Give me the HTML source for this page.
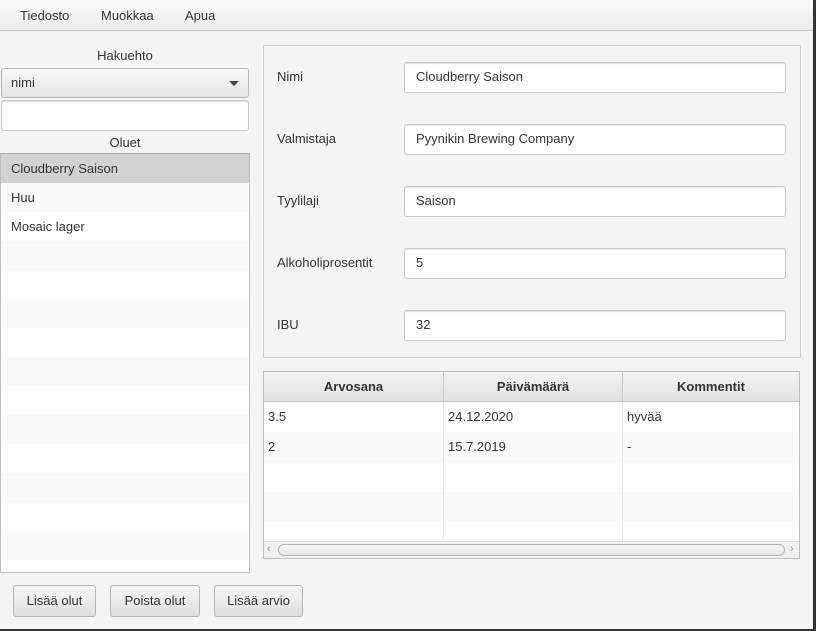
<!DOCTYPE html>
<html><head><meta charset="utf-8"><style>
*{box-sizing:border-box;margin:0;padding:0}
body{width:816px;height:631px;background:#333;font-family:"Liberation Sans",sans-serif;font-size:13px;color:#333;position:relative;overflow:hidden}
#app{position:absolute;left:0;top:0;width:813px;height:629px;background:#f4f4f4}
.abs{position:absolute}
.menu{left:0;top:0;width:813px;height:31px;background:linear-gradient(#fbfbfb,#ececec);border-bottom:1px solid #c8c8c8}
.menu span{position:absolute;top:8px}
.lbl{position:absolute}
.field{position:absolute;background:#fff;border:1px solid #c8c8c8;border-radius:3px;box-shadow:inset 0 1px 1px #e6e6e6;padding-left:11px;line-height:28px;color:#333}
.list{left:0;top:153px;width:250px;height:420px;border:1px solid #bdbdbd;border-top-color:#aaa;background:#fff;overflow:hidden}
.list div{height:29px;line-height:29px;padding-left:10px}
.btn{position:absolute;top:585px;height:32px;border:1px solid #b5b5b5;border-radius:3px;background:linear-gradient(#f7f7f7,#dedede);text-align:center;line-height:30px;color:#333}
table{border-collapse:collapse}
.tbl{left:263px;top:371px;width:537px;height:188px;border:1px solid #bdbdbd;background:#fff;overflow:hidden}
.hdr{position:absolute;top:0;height:30px;background:linear-gradient(#f4f4f4,#e2e2e2);border-right:1px solid #ccc;border-bottom:1px solid #c5c5c5;text-align:center;line-height:29px;font-weight:bold;color:#333}
.row{position:absolute;left:0;width:535px;height:30px}
.cell{position:absolute;top:0;height:30px;border-right:1px solid #e8e8e8;line-height:29px;padding-left:4px}
</style></head><body><div id="app">
<div class="abs menu"><span style="left:20px">Tiedosto</span><span style="left:101px">Muokkaa</span><span style="left:185px">Apua</span></div>
<div class="lbl" style="left:0;width:250px;text-align:center;top:48px">Hakuehto</div>
<div class="abs" style="left:1px;top:68px;width:248px;height:30px;border:1px solid #b8b8b8;border-radius:3px;background:linear-gradient(#f9f9f9,#e4e4e4);padding-left:9px;line-height:28px">nimi<div class="abs" style="right:9px;top:12px;width:0;height:0;border-left:5px solid transparent;border-right:5px solid transparent;border-top:5px solid #444"></div></div>
<div class="field" style="left:1px;top:100px;width:248px;height:31px"></div>
<div class="lbl" style="left:0;width:250px;text-align:center;top:135px">Oluet</div>
<div class="abs list">
<div style="background:#d2d2d2">Cloudberry Saison</div>
<div style="background:#f9f9f9">Huu</div>
<div>Mosaic lager</div>
<div style="background:#f9f9f9"></div><div></div><div style="background:#f9f9f9"></div><div></div><div style="background:#f9f9f9"></div><div></div><div style="background:#f9f9f9"></div><div></div><div style="background:#f9f9f9"></div><div></div><div style="background:#f9f9f9"></div><div></div>
</div>
<div class="abs" style="left:263px;top:45px;width:538px;height:313px;border:1px solid #cfcfcf"></div>
<div class="lbl" style="left:277px;top:69px">Nimi</div>
<div class="field" style="left:404px;top:62px;width:382px;height:31px">Cloudberry Saison</div>
<div class="lbl" style="left:277px;top:131px">Valmistaja</div>
<div class="field" style="left:404px;top:124px;width:382px;height:31px">Pyynikin Brewing Company</div>
<div class="lbl" style="left:277px;top:193px">Tyylilaji</div>
<div class="field" style="left:404px;top:186px;width:382px;height:31px">Saison</div>
<div class="lbl" style="left:277px;top:255px">Alkoholiprosentit</div>
<div class="field" style="left:404px;top:248px;width:382px;height:31px">5</div>
<div class="lbl" style="left:277px;top:317px">IBU</div>
<div class="field" style="left:404px;top:310px;width:382px;height:31px">32</div>
<div class="abs tbl">
<div class="hdr" style="left:0;width:180px">Arvosana</div>
<div class="hdr" style="left:180px;width:179px">Päivämäärä</div>
<div class="hdr" style="left:359px;width:177px">Kommentit</div>
<div class="row" style="top:30px;background:#fff"><div class="cell" style="left:0;width:180px">3.5</div><div class="cell" style="left:180px;width:179px">24.12.2020</div><div class="cell" style="left:359px;width:177px">hyvää</div></div>
<div class="row" style="top:60px;background:#f9f9f9"><div class="cell" style="left:0;width:180px">2</div><div class="cell" style="left:180px;width:179px">15.7.2019</div><div class="cell" style="left:359px;width:177px">-</div></div>
<div class="row" style="top:90px;background:#fff"><div class="cell" style="left:0;width:180px"></div><div class="cell" style="left:180px;width:179px"></div><div class="cell" style="left:359px;width:177px"></div></div>
<div class="row" style="top:120px;background:#f9f9f9"><div class="cell" style="left:0;width:180px"></div><div class="cell" style="left:180px;width:179px"></div><div class="cell" style="left:359px;width:177px"></div></div>
<div class="row" style="top:150px;background:#fff"><div class="cell" style="left:0;width:180px"></div><div class="cell" style="left:180px;width:179px"></div><div class="cell" style="left:359px;width:177px"></div></div>
<div class="abs" style="left:0;top:169px;width:535px;height:17px;background:#f0f0f0;border-top:1px solid #ddd">
<div class="abs" style="left:3px;top:1px;color:#999;font-size:11px">&lsaquo;</div>
<div class="abs" style="left:14px;top:2px;width:507px;height:12px;border:1px solid #b5b5b5;border-radius:6px;background:linear-gradient(#fafafa,#e4e4e4)"></div>
<div class="abs" style="left:526px;top:1px;color:#999;font-size:11px">&rsaquo;</div>
</div>
</div>
<div class="btn" style="left:13px;width:83px">Lisää olut</div>
<div class="btn" style="left:110px;width:90px">Poista olut</div>
<div class="btn" style="left:214px;width:89px">Lisää arvio</div>
</div></body></html>
